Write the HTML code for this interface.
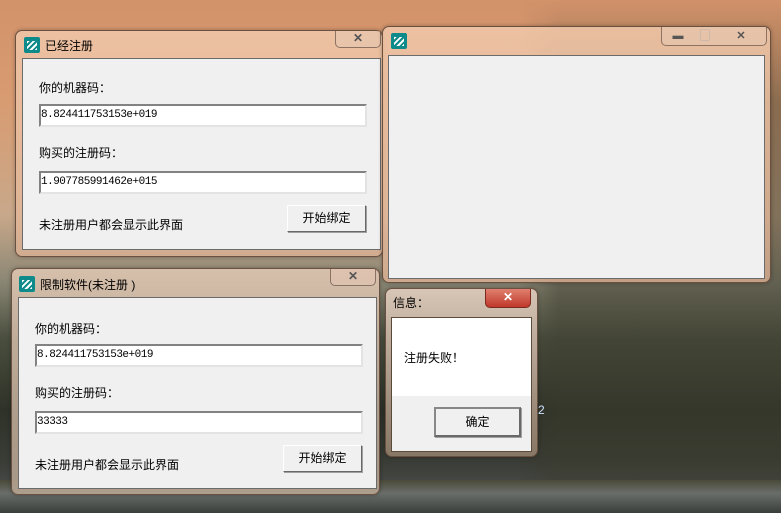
<!DOCTYPE html>
<html><head><meta charset="utf-8"><style>
*{margin:0;padding:0;box-sizing:border-box}
body{width:781px;height:513px;overflow:hidden;position:relative;font-family:"Liberation Sans","Noto Sans CJK SC",sans-serif;font-size:12px;color:#000;
background:linear-gradient(180deg,#d2926a 0%,#d89c72 20%,#c8a88a 42%,#8a8674 55%,#4a4e3e 66%,#2e3228 80%,#3a3c36 90%,#55585a 100%);}
.bg1{position:absolute;left:520px;top:0;width:261px;height:513px;background:linear-gradient(90deg,rgba(60,60,45,0) 0%,rgba(60,60,45,.5) 15%,rgba(60,60,45,.5) 100%);-webkit-mask:linear-gradient(180deg,transparent 0,#000 20%,#000 100%)}
.bg2{position:absolute;left:0;top:480px;width:781px;height:33px;background:linear-gradient(180deg,#4a4a3a,#6a6e6a 40%,#3a3e3a)}
.win{position:absolute;border:1px solid #6a5040;border-radius:7px;background:linear-gradient(180deg,rgba(240,200,170,.85),rgba(225,180,150,.75));box-shadow:0 0 4px rgba(0,0,0,.3)}
.client{position:absolute;background:#f0f0f0;border:1px solid #6b6b6b}
.title{position:absolute;font-size:12px;color:#000}
.ico{position:absolute;width:16px;height:16px;background:#0e8a8a;border-radius:2px}
.ico:after{content:"";position:absolute;left:3px;top:4px;width:10px;height:9px;background:repeating-linear-gradient(135deg,#fff 0 2px,transparent 2px 4px)}
.cbtn{position:absolute;border:1px solid rgba(80,60,50,.6);border-top:none;border-radius:0 0 5px 5px;background:rgba(230,200,180,.5);text-align:center;font-weight:bold;color:#555;font-size:12px;line-height:15px}
.lbl{position:absolute;font-size:12px}
.inp{position:absolute;background:#fff;border:2px solid;border-color:#828282 #e3e3e3 #e3e3e3 #828282;font-family:"Liberation Mono","Noto Sans CJK SC",monospace;font-size:11px;line-height:19px;padding-left:0;letter-spacing:-.5px}
.btn{position:absolute;background:#f0f0f0;border:1px solid;border-color:#fff #696969 #696969 #fff;box-shadow:1px 1px 0 #a0a0a0;text-align:center;font-size:12px}
</style></head><body>
<div class="bg1"></div><div class="bg2"></div>

<div class="win" style="left:15px;top:30px;width:368px;height:227px">
 <div class="ico" style="left:8px;top:6px"></div>
 <div class="title" style="left:29px;top:6px">已经注册</div>
 <div class="cbtn" style="left:319px;top:0;width:46px;height:17px">✕</div>
 <div class="client" style="left:6px;top:27px;width:359px;height:192px">
  <div class="lbl" style="left:16px;top:20px">你的机器码：</div>
  <div class="inp" style="left:16px;top:45px;width:328px;height:23px">8.824411753153e+019</div>
  <div class="lbl" style="left:16px;top:85px">购买的注册码：</div>
  <div class="inp" style="left:16px;top:112px;width:328px;height:23px">1.907785991462e+015</div>
  <div class="lbl" style="left:16px;top:157px">未注册用户都会显示此界面</div>
  <div class="btn" style="left:264px;top:146px;width:79px;height:27px;line-height:25px">开始绑定</div>
 </div>
</div>

<div class="win" style="left:382px;top:26px;width:389px;height:257px">
 <div class="ico" style="left:8px;top:6px"></div>
 <div class="cbtn" style="left:278px;top:0;width:106px;height:19px;line-height:18px;font-size:11px"><span style="display:inline-block;width:28px">▬</span><span style="display:inline-block;width:26px;color:#aaa">▢</span><span style="display:inline-block;width:46px">✕</span></div>
 <div class="client" style="left:5px;top:28px;width:377px;height:224px"></div>
</div>

<div class="win" style="left:11px;top:268px;width:369px;height:227px;background:linear-gradient(180deg,rgba(225,200,180,.85),rgba(190,170,150,.8))">
 <div class="ico" style="left:7px;top:7px"></div>
 <div class="title" style="left:28px;top:7px">限制软件(未注册 )</div>
 <div class="cbtn" style="left:318px;top:0;width:46px;height:17px">✕</div>
 <div class="client" style="left:6px;top:28px;width:359px;height:192px">
  <div class="lbl" style="left:16px;top:22px">你的机器码：</div>
  <div class="inp" style="left:16px;top:46px;width:328px;height:23px">8.824411753153e+019</div>
  <div class="lbl" style="left:16px;top:86px">购买的注册码：</div>
  <div class="inp" style="left:16px;top:113px;width:328px;height:23px">33333</div>
  <div class="lbl" style="left:16px;top:158px">未注册用户都会显示此界面</div>
  <div class="btn" style="left:264px;top:147px;width:79px;height:27px;line-height:25px">开始绑定</div>
 </div>
</div>

<div class="win" style="left:385px;top:288px;width:153px;height:169px;background:linear-gradient(180deg,rgba(225,205,190,.9),rgba(150,130,110,.85))">
 <div class="title" style="left:7px;top:5px">信息：</div>
 <div style="position:absolute;left:99px;top:0;width:46px;height:19px;border-radius:0 0 5px 5px;background:linear-gradient(180deg,#e08070,#c0382a);border:1px solid #7a2a20;border-top:none;color:#fff;text-align:center;font-weight:bold;line-height:17px">✕</div>
 <div class="client" style="left:5px;top:28px;width:141px;height:135px;border-color:#5a4a3a">
  <div style="position:absolute;left:0;top:0;width:139px;height:78px;background:#fff"></div>
  <div class="lbl" style="left:12px;top:31px">注册失败！</div>
  <div class="btn" style="left:42px;top:89px;width:87px;height:30px;line-height:27px;border:2px solid;border-color:#888 #696969 #696969 #888">确定</div>
 </div>
</div>
<div style="position:absolute;left:538px;top:403px;color:#cfe0ff;font-size:12px">2</div>
</body></html>
